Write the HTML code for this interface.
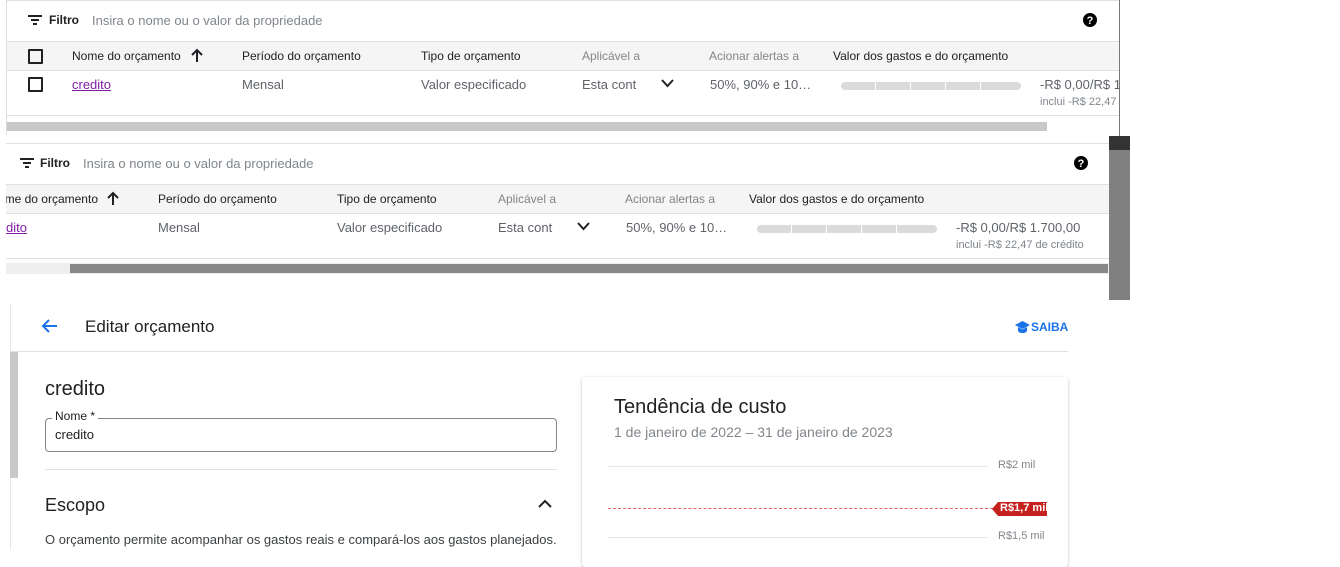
<!DOCTYPE html>
<html><head><meta charset="utf-8"><style>
*{margin:0;padding:0;box-sizing:border-box}
body{width:1340px;height:550px;background:#fff;font-family:"Liberation Sans",Arial,sans-serif;position:relative;overflow:hidden;color:#202124}
.a{position:absolute;white-space:nowrap}
.h{font-size:12px;color:#202124}
.g{color:#5f6368}
.c{font-size:13px;color:#5f6368}
.bar{position:absolute;height:8px;border-radius:4px;background:#dadada}
.bar i{position:absolute;top:0;width:1px;height:8px;background:#fff}
</style></head><body>
<!-- Section 1 -->
<div class="a" style="left:6px;top:0;width:1114px;height:1px;background:#e0e0e0"></div>
<div class="a" style="left:6px;top:0;width:1px;height:135px;background:#ddd"></div>
<div class="a" style="left:1119px;top:0;width:1px;height:136px;background:#777"></div>
<svg class="a" style="left:28px;top:14px" width="14" height="12" viewBox="0 0 14 12"><rect x="0" y="1" width="14" height="2" fill="#202124"/><rect x="3" y="5" width="8" height="2" fill="#202124"/><rect x="5" y="9" width="4" height="2" fill="#202124"/></svg>
<div class="a" style="left:49px;top:13px;font-size:12px;font-weight:bold">Filtro</div>
<div class="a c" style="left:92px;top:13px;color:#80868b">Insira o nome ou o valor da propriedade</div>
<svg class="a" style="left:1083px;top:13px" width="14" height="14" viewBox="0 0 14 14"><circle cx="7" cy="7" r="7" fill="#000"/><text x="7" y="11" font-size="11" font-weight="bold" fill="#fff" text-anchor="middle" font-family="Liberation Sans">?</text></svg>
<div class="a" style="left:7px;top:41px;width:1112px;height:30px;background:#f5f5f5;border-top:1px solid #e0e0e0;border-bottom:1px solid #e0e0e0"></div>
<div class="a" style="left:28px;top:49px;width:15px;height:15px;border:2px solid #202124;border-radius:1px"></div>
<div class="a h" style="left:72px;top:49px">Nome do orçamento</div>
<svg class="a" style="left:191px;top:48px" width="12" height="14" viewBox="0 0 12 14"><path d="M6 14V2M1 7l5-5 5 5" stroke="#202124" stroke-width="2" fill="none"/></svg>
<div class="a h" style="left:242px;top:49px">Período do orçamento</div>
<div class="a h" style="left:421px;top:49px">Tipo de orçamento</div>
<div class="a h g" style="left:582px;top:49px;color:#80868b">Aplicável a</div>
<div class="a h" style="left:709px;top:49px;color:#80868b">Acionar alertas a</div>
<div class="a h" style="left:833px;top:49px">Valor dos gastos e do orçamento</div>
<div class="a" style="left:28px;top:77px;width:15px;height:15px;border:2px solid #202124;border-radius:1px"></div>
<div class="a c" style="left:72px;top:77px;color:#7b1fa2;text-decoration:underline">credito</div>
<div class="a c" style="left:242px;top:77px">Mensal</div>
<div class="a c" style="left:421px;top:77px">Valor especificado</div>
<div class="a c" style="left:582px;top:77px">Esta cont</div>
<svg class="a" style="left:661px;top:79px" width="13" height="9" viewBox="0 0 13 9"><path d="M1 1l5.5 6L12 1" stroke="#202124" stroke-width="2" fill="none"/></svg>
<div class="a c" style="left:710px;top:77px">50%, 90% e 10…</div>
<div class="bar" style="left:841px;top:82px;width:180px"><i style="left:34px"></i><i style="left:69px"></i><i style="left:104px"></i><i style="left:139px"></i></div>
<div class="a c" style="left:1040px;top:77px;width:79px;overflow:hidden">-R$ 0,00/R$ 1.700,00</div>
<div class="a" style="left:1040px;top:96px;font-size:11px;color:#80868b;width:79px;overflow:hidden">inclui -R$ 22,47 de crédito</div>
<div class="a" style="left:7px;top:115px;width:1112px;height:1px;background:#e0e0e0"></div>
<div class="a" style="left:7px;top:122px;width:1040px;height:9px;background:#c8c8c8"></div>
<!-- Section 2 -->
<div class="a" style="left:6px;top:143px;width:1104px;height:1px;background:#e0e0e0"></div>
<svg class="a" style="left:20px;top:157px" width="14" height="12" viewBox="0 0 14 12"><rect x="0" y="1" width="14" height="2" fill="#202124"/><rect x="3" y="5" width="8" height="2" fill="#202124"/><rect x="5" y="9" width="4" height="2" fill="#202124"/></svg>
<div class="a" style="left:40px;top:156px;font-size:12px;font-weight:bold">Filtro</div>
<div class="a c" style="left:83px;top:156px;color:#80868b">Insira o nome ou o valor da propriedade</div>
<svg class="a" style="left:1074px;top:156px" width="14" height="14" viewBox="0 0 14 14"><circle cx="7" cy="7" r="7" fill="#000"/><text x="7" y="11" font-size="11" font-weight="bold" fill="#fff" text-anchor="middle" font-family="Liberation Sans">?</text></svg>
<div class="a" style="left:6px;top:184px;width:1103px;height:30px;background:#f5f5f5;border-top:1px solid #e0e0e0;border-bottom:1px solid #e0e0e0;overflow:hidden"></div>
<div class="a h" style="left:6px;top:192px;width:92px;overflow:hidden;direction:rtl">Nome do orçamento</div>
<svg class="a" style="left:107px;top:191px" width="12" height="14" viewBox="0 0 12 14"><path d="M6 14V2M1 7l5-5 5 5" stroke="#202124" stroke-width="2" fill="none"/></svg>
<div class="a h" style="left:158px;top:192px">Período do orçamento</div>
<div class="a h" style="left:337px;top:192px">Tipo de orçamento</div>
<div class="a h" style="left:498px;top:192px;color:#80868b">Aplicável a</div>
<div class="a h" style="left:625px;top:192px;color:#80868b">Acionar alertas a</div>
<div class="a h" style="left:749px;top:192px">Valor dos gastos e do orçamento</div>
<div class="a c" style="left:6px;top:220px;color:#7b1fa2;text-decoration:underline">dito</div>
<div class="a c" style="left:158px;top:220px">Mensal</div>
<div class="a c" style="left:337px;top:220px">Valor especificado</div>
<div class="a c" style="left:498px;top:220px">Esta cont</div>
<svg class="a" style="left:577px;top:222px" width="13" height="9" viewBox="0 0 13 9"><path d="M1 1l5.5 6L12 1" stroke="#202124" stroke-width="2" fill="none"/></svg>
<div class="a c" style="left:626px;top:220px">50%, 90% e 10…</div>
<div class="bar" style="left:757px;top:225px;width:180px"><i style="left:34px"></i><i style="left:69px"></i><i style="left:104px"></i><i style="left:139px"></i></div>
<div class="a c" style="left:956px;top:220px">-R$ 0,00/R$ 1.700,00</div>
<div class="a" style="left:956px;top:239px;font-size:11px;color:#80868b">inclui -R$ 22,47 de crédito</div>
<div class="a" style="left:6px;top:258px;width:1103px;height:1px;background:#e0e0e0"></div>
<div class="a" style="left:6px;top:263px;width:1103px;height:11px;background:#eee"></div>
<div class="a" style="left:70px;top:264px;width:1038px;height:9px;background:#888"></div>
<div class="a" style="left:1109px;top:136px;width:21px;height:164px;background:#808080"></div>
<div class="a" style="left:1109px;top:136px;width:21px;height:14px;background:#333"></div>
<!-- Section 3 -->
<div class="a" style="left:10px;top:304px;width:1px;height:246px;background:#e8e8e8"></div>
<svg class="a" style="left:40px;top:318px" width="18" height="16" viewBox="0 0 18 16"><path d="M17 8H3M9 2L3 8l6 6" stroke="#1a73e8" stroke-width="2" fill="none"/></svg>
<div class="a" style="left:85px;top:317px;font-size:17px;color:#202124">Editar orçamento</div>
<svg class="a" style="left:1014px;top:320px" width="17" height="14" viewBox="0 0 17 14"><path d="M8.5 1L1 5l7.5 4L16 5zM4 7v3.5c0 1.5 2 2.5 4.5 2.5s4.5-1 4.5-2.5V7L8.5 9.5z" fill="#1a73e8"/></svg>
<div class="a" style="left:1031px;top:320px;font-size:12px;font-weight:bold;color:#1a73e8">SAIBA</div>
<div class="a" style="left:10px;top:351px;width:1058px;height:1px;background:#e0e0e0"></div>
<div class="a" style="left:10px;top:352px;width:8px;height:126px;background:#c8c8c8"></div>
<div class="a" style="left:45px;top:378px;font-size:20px">credito</div>
<div class="a" style="left:45px;top:418px;width:512px;height:34px;border:1px solid #80868b;border-radius:4px"></div>
<div class="a" style="left:52px;top:409px;font-size:12px;background:#fff;padding:0 3px">Nome *</div>
<div class="a" style="left:55px;top:427px;font-size:13px">credito</div>
<div class="a" style="left:45px;top:469px;width:512px;height:1px;background:#e0e0e0"></div>
<div class="a" style="left:45px;top:495px;font-size:18px">Escopo</div>
<svg class="a" style="left:538px;top:499px" width="14" height="10" viewBox="0 0 14 10"><path d="M1 8l6-6 6 6" stroke="#202124" stroke-width="2" fill="none"/></svg>
<div class="a" style="left:45px;top:532px;font-size:13px;color:#3c4043">O orçamento permite acompanhar os gastos reais e compará-los aos gastos planejados.</div>
<div class="a" style="left:582px;top:377px;width:486px;height:190px;background:#fff;border-radius:4px;box-shadow:0 1px 3px rgba(0,0,0,.25)"></div>
<div class="a" style="left:614px;top:396px;font-size:20px">Tendência de custo</div>
<div class="a" style="left:614px;top:424px;font-size:14px;color:#80868b">1 de janeiro de 2022 – 31 de janeiro de 2023</div>
<div class="a" style="left:608px;top:466px;width:380px;height:1px;background:#e8e8e8"></div>
<div class="a" style="left:998px;top:459px;font-size:11px;color:#80868b">R$2 mil</div>
<div class="a" style="left:608px;top:508px;width:385px;border-top:1.5px dashed #e06666"></div>
<div class="a" style="left:992px;top:502px;height:14px;width:55px;background:#c5221f;clip-path:polygon(6px 0,100% 0,100% 100%,6px 100%,0 50%)"></div>
<div class="a" style="left:1000px;top:502px;font-size:11px;font-weight:bold;color:#fff">R$1,7 mil</div>
<div class="a" style="left:608px;top:537px;width:380px;height:1px;background:#e8e8e8"></div>
<div class="a" style="left:998px;top:530px;font-size:11px;color:#80868b">R$1,5 mil</div>
</body></html>
